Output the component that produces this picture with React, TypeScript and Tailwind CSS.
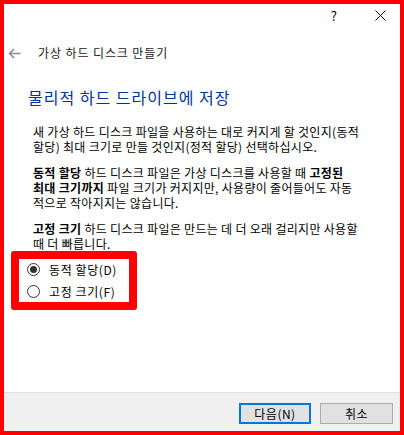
import React from 'react';

// 가상 하드 디스크 만들기 - 저장 방식 선택 단계

const font = { fontFamily: "'Noto Sans CJK KR', 'Noto Sans', sans-serif" };

const RadioRow: React.FC<{ checked?: boolean; label: string; className: string }> = ({ checked, label, className }) => (
  <div className={`flex items-center pl-[8px] ${className}`}>
    <span className="w-[13px] h-[13px] rounded-full border border-[#333333] bg-white flex items-center justify-center">
      {checked && <span className="w-[7px] h-[7px] rounded-full bg-[#333333]" />}
    </span>
    <span className="ml-[9px] text-[12px] leading-[15px] tracking-[0.6px] text-black whitespace-nowrap">{label}</span>
  </div>
);

const App: React.FC = () => {
  return (
    <div className="w-[404px] h-[435px] border-4 border-[#ff0000] bg-white flex flex-col" style={font}>
      <div className="flex-1 flex flex-col">
        {/* 창 제목 표시줄 */}
        <div className="h-[22px] flex items-center justify-end">
          <span className="text-[13px] leading-none text-black mr-[38px]">?</span>
          <svg width="11" height="11" viewBox="0 0 11 11" className="mr-[14px]">
            <path d="M0.5 0.5 L10.5 10.5 M10.5 0.5 L0.5 10.5" stroke="#111" strokeWidth="1" />
          </svg>
        </div>

        {/* 뒤로 가기 + 마법사 제목 */}
        <div className="mt-[17px] h-[20px] flex items-center">
          <svg width="13" height="11" viewBox="0 0 13 11" className="ml-[4px]">
            <path d="M12.5 5.5 H1.5 M6 1 L1.5 5.5 L6 10" stroke="#8c8c8c" strokeWidth="1.6" fill="none" />
          </svg>
          <span className="ml-[17px] text-[12px] tracking-[0.9px] text-[#1a1a1a] whitespace-nowrap">가상 하드 디스크 만들기</span>
        </div>

        <h1 className="mt-[23px] ml-[24px] h-[22px] leading-[22px] text-[16px] tracking-[1px] text-[#003399] whitespace-nowrap">
          물리적 하드 드라이브에 저장
        </h1>

        <div className="mt-[16px] ml-[29px] text-[12px] leading-[15px] tracking-[0.3px] text-black whitespace-nowrap">
          <p>
            새 가상 하드 디스크 파일을 사용하는 대로 커지게 할 것인지(동적
            <br />
            할당) 최대 크기로 만들 것인지(정적 할당) 선택하십시오.
          </p>
          <p className="mt-[11px]">
            <b>동적 할당</b> 하드 디스크 파일은 가상 디스크를 사용할 때 <b>고정된</b>
            <br />
            <b>최대 크기까지</b> 파일 크기가 커지지만, 사용량이 줄어들어도 자동
            <br />
            적으로 작아지지는 않습니다.
          </p>
          <p className="mt-[11px]">
            <b>고정 크기</b> 하드 디스크 파일은 만드는 데 더 오래 걸리지만 사용할
            <br />
            때 더 빠릅니다.
          </p>
        </div>

        {/* 선택 옵션 (빨간 강조 상자) */}
        <div className="ml-[7px] w-[126px] border-[8px] border-[#ff0000] rounded-[3px] bg-white">
          <RadioRow checked label="동적 할당(D)" className="h-[21px]" />
          <RadioRow label="고정 크기(F)" className="h-[22px]" />
        </div>
      </div>

      {/* 하단 버튼 영역 */}
      <div className="h-[39px] border-t border-[#dfdfdf] bg-[#f0f0f0] flex items-start justify-end pt-[10px] pr-[7px] gap-[9px]">
        <button className="w-[72px] h-[21px] border-2 border-[#0078d7] bg-[#e1e1e1] text-[12px] leading-none tracking-[0.5px] text-black">
          다음(N)
        </button>
        <button className="w-[73px] h-[21px] border border-[#adadad] bg-[#e1e1e1] text-[12px] leading-none tracking-[0.5px] text-black">
          취소
        </button>
      </div>
    </div>
  );
};

export default App;
